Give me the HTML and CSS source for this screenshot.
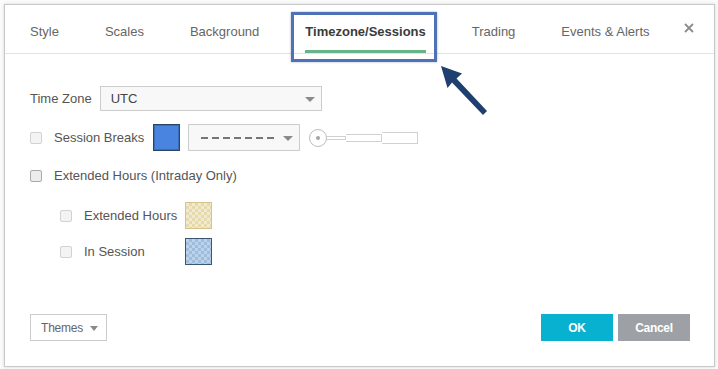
FILE: index.html
```html
<!DOCTYPE html>
<html>
<head>
    <title>Chart Properties</title>
    <link rel="stylesheet" href="styles.css">
</head>
<body>
    <div class="page">
        <div class="dialog">
            <div class="tabs">
                <div class="tab-list">
                    <div class="tab">Style</div>
                    <div class="tab">Scales</div>
                    <div class="tab">Background</div>
                    <div class="tab active">Timezone/Sessions</div>
                    <div class="tab">Trading</div>
                    <div class="tab">Events &amp; Alerts</div>
                </div>
                <div class="close">
                    <svg width="10" height="10" viewBox="0 0 10 10"><path d="M1 1L9 9M9 1L1 9" stroke="#8c8c8c" stroke-width="1.8"/></svg>
                </div>
            </div>

            <div class="body">
                <div class="row row-tz">
                    <span class="label">Time Zone</span>
                    <div class="select tz-select">UTC<span class="caret"></span></div>
                </div>

                <div class="row row-breaks">
                    <span class="check"></span>
                    <span class="label">Session Breaks</span>
                    <span class="swatch blue"></span>
                    <div class="select line-select"><span class="dashes"></span><span class="caret"></span></div>
                    <div class="width-slider">
                        <span class="knob"></span>
                        <span class="seg seg1"></span>
                        <span class="seg seg2"></span>
                        <span class="seg seg3"></span>
                    </div>
                </div>

                <div class="row row-ext">
                    <span class="check dark"></span>
                    <span class="label">Extended Hours (Intraday Only)</span>
                </div>

                <div class="row row-sub">
                    <span class="check"></span>
                    <span class="label sub-label">Extended Hours</span>
                    <span class="swatch checker-beige"></span>
                </div>

                <div class="row row-sub2">
                    <span class="check"></span>
                    <span class="label sub-label">In Session</span>
                    <span class="swatch checker-blue"></span>
                </div>
            </div>

            <div class="footer">
                <div class="themes">Themes<span class="caret"></span></div>
                <div class="buttons">
                    <button class="btn ok">OK</button>
                    <button class="btn cancel">Cancel</button>
                </div>
            </div>
        </div>

        <!-- annotation drawn over the screenshot -->
        <div class="callout"></div>
        <svg class="arrow" width="718" height="369" viewBox="0 0 718 369">
            <polygon points="441,66 462,73.5 456.5,78.5 487,111 483,115 452,82.5 447.5,88" fill="#1f3f6e"/>
        </svg>
    </div>
</body>
</html>
```

FILE: styles.css
```css
body {
    margin: 0;
    font-family: "Liberation Sans", Arial, sans-serif;
    font-size: 13px;
    color: #555;
    background: #fff;
}

.page {
    position: relative;
    width: 718px;
    height: 369px;
    padding: 4px 3px 2px 4px;
    box-sizing: border-box;
    overflow: hidden;
    background: #fbfbfb;
}

.dialog {
    width: 711px;
    height: 363px;
    box-sizing: border-box;
    border: 1px solid #c9c9c9;
    background: #fff;
    box-shadow: 0 0 3px rgba(0, 0, 0, .15);
    display: flex;
    flex-direction: column;
}

/* tabs */
.tabs {
    display: flex;
    padding: 0 20px 0 25px;
    border-bottom: 1px solid #e2e2e2;
}

.tab-list {
    display: flex;
    gap: 46px;
}

.tab {
    padding: 19px 0 10px;
    line-height: 16px;
    border-bottom: 3px solid transparent;
    color: #666;
    white-space: nowrap;
}

.tab.active {
    color: #3b3b3b;
    font-weight: bold;
    border-bottom-color: #66b487;
}

.close {
    margin-left: auto;
    margin-top: 18px;
    line-height: 0;
}

/* body */
.body {
    padding: 32px 25px 0;
    display: flex;
    flex-direction: column;
}

.row {
    display: flex;
    align-items: center;
}

.row-tz { height: 25px; }
.row-breaks { height: 27px; margin-top: 13px; }
.row-ext { height: 20px; margin-top: 15px; }
.row-sub { height: 27px; margin-top: 16px; padding-left: 30px; }
.row-sub2 { height: 27px; margin-top: 9px; padding-left: 30px; }

.label {
    line-height: 16px;
    white-space: nowrap;
}

.row-tz .label { margin-right: 8px; }
.row-breaks .label { margin-right: 9px; }
.sub-label { width: 101px; }

.check {
    width: 12px;
    height: 12px;
    box-sizing: border-box;
    border: 1px solid #d2d2d2;
    border-radius: 2px;
    background: #f3f3f3;
    margin-right: 12px;
    flex: none;
}

.check.dark {
    border-color: #a9a9a9;
    background: #ececec;
}

.select {
    position: relative;
    box-sizing: border-box;
    border: 1px solid #cccccc;
    background: #f8f8f8;
    display: flex;
    align-items: center;
}

.tz-select {
    width: 222px;
    height: 25px;
    padding-left: 10px;
    color: #444;
}

.line-select {
    width: 112px;
    height: 27px;
    margin-left: 8px;
    padding-left: 12px;
}

.caret {
    position: absolute;
    right: 6px;
    top: 50%;
    margin-top: -2px;
    width: 0;
    height: 0;
    border-left: 5px solid transparent;
    border-right: 5px solid transparent;
    border-top: 5px solid #8a8a8a;
}

.dashes {
    width: 73px;
    height: 2px;
    background: repeating-linear-gradient(90deg, #767676 0 7px, transparent 7px 11px);
}

.swatch {
    width: 27px;
    height: 27px;
    box-sizing: border-box;
    flex: none;
}

.swatch.blue {
    border: 1px solid #2a4763;
    background: #4984e0;
    box-shadow: inset 0 0 0 1px #3a6db8;
}

.checker-beige {
    border: 1px solid #d6c38a;
    background: repeating-conic-gradient(#e6d9ab 0 25%, #f2ead0 0 50%) 0 0 / 6px 6px;
}

.checker-blue {
    border: 1px solid #3b566f;
    background: repeating-conic-gradient(#9ebcdb 0 25%, #bdd2e8 0 50%) 0 0 / 6px 6px;
}

.width-slider {
    display: flex;
    align-items: center;
    margin-left: 9px;
}

.knob {
    position: relative;
    width: 18px;
    height: 18px;
    box-sizing: border-box;
    border: 1px solid #bdbdbd;
    border-radius: 50%;
    background: #fff;
}

.knob::after {
    content: "";
    position: absolute;
    left: 6px;
    top: 6px;
    width: 4px;
    height: 4px;
    border-radius: 50%;
    background: #a5a5a5;
}

.seg {
    box-sizing: border-box;
    border: 1px solid #d0d0d0;
    background: #fff;
}

.seg1 { width: 19px; height: 4px; border-left: none; }
.seg2 { width: 36px; height: 8px; border-left: none; }
.seg3 { width: 36px; height: 12px; border-left: none; }

/* footer */
.footer {
    margin-top: auto;
    padding: 0 24px 25px 25px;
    display: flex;
    align-items: center;
}

.themes {
    position: relative;
    width: 77px;
    height: 27px;
    box-sizing: border-box;
    border: 1px solid #cccccc;
    padding-left: 10px;
    display: flex;
    align-items: center;
    font-size: 12px;
    letter-spacing: -0.2px;
    color: #666;
}

.themes .caret {
    right: 8px;
    border-left-width: 4px;
    border-right-width: 4px;
}

.buttons {
    margin-left: auto;
    display: flex;
    gap: 5px;
}

.btn {
    width: 72px;
    height: 27px;
    border: none;
    padding: 0;
    color: #fff;
    font-family: "Liberation Sans", Arial, sans-serif;
    font-size: 12px;
    font-weight: bold;
    letter-spacing: -0.3px;
    cursor: pointer;
}

.btn.ok { background: #08b1cf; }
.btn.cancel { background: #9da1a6; }

/* annotation */
.callout {
    position: absolute;
    left: 291px;
    top: 12px;
    width: 146px;
    height: 50px;
    box-sizing: border-box;
    border: 3px solid #4e72b5;
    box-shadow: 0 0 2px rgba(40, 60, 110, .4);
}

.arrow {
    position: absolute;
    left: 0;
    top: 0;
    pointer-events: none;
}
```
